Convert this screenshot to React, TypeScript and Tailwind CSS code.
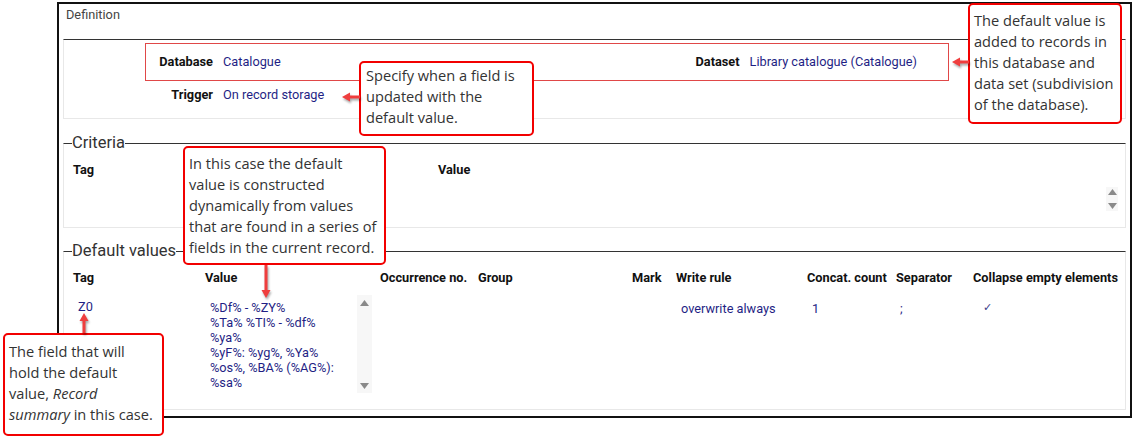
import type { ReactNode } from 'react'

const navy = 'text-[#1f1f85]'

function Arrow({ len, dir }: { len: number; dir: 'left' | 'up' | 'down' }) {
  const horiz = dir === 'left'
  const w = horiz ? len : 10
  const h = horiz ? 10 : len
  let head = ''
  let shaft = { x: 0, y: 0, w: 0, h: 0 }
  if (dir === 'left') {
    head = `0,5 8,0.5 8,9.5`
    shaft = { x: 7, y: 3.5, w: len - 7, h: 3 }
  } else if (dir === 'down') {
    head = `5,${len} 0.5,${len - 8} 9.5,${len - 8}`
    shaft = { x: 3.5, y: 0, w: 3, h: len - 7 }
  } else {
    head = `5,0 0.5,8 9.5,8`
    shaft = { x: 3.5, y: 7, w: 3, h: len - 7 }
  }
  return (
    <svg width={w} height={h} viewBox={`0 0 ${w} ${h}`} className="drop-shadow-[1px_2px_1px_rgba(0,0,0,0.35)]">
      <polygon points={head} fill="#ef3e3e" />
      <rect x={shaft.x} y={shaft.y} width={shaft.w} height={shaft.h} fill="#ef3e3e" />
    </svg>
  )
}

function Callout({ className, lines }: { className: string; lines: ReactNode[] }) {
  return (
    <div
      className={
        "absolute whitespace-nowrap rounded-[5px] border-2 border-[#f20000] bg-white font-['Open_Sans',sans-serif] text-[14.6px] leading-[21px] text-[#333] " +
        className
      }
    >
      {lines.map((l, i) => (
        <div key={i}>{l}</div>
      ))}
    </div>
  )
}

function Tri({ up }: { up?: boolean }) {
  return (
    <svg width="9" height="6" viewBox="0 0 9 6">
      <polygon points={up ? '4.5,0 0,6 9,6' : '0,0 9,0 4.5,6'} fill="#8a8a8a" />
    </svg>
  )
}

const cols = 'grid grid-cols-[132px_175px_98px_154px_44px_131px_89px_77px_1fr] pl-[9px]'

export default function App() {
  return (
    <div className="relative h-[439px] w-[1133px] overflow-hidden bg-white font-['Roboto',sans-serif] text-[12.75px] text-[#111]">
      <div className="ml-[57px] mt-[2px] flex h-[416px] w-[1075px] flex-col border-2 border-[#111] px-[4px]">
        <div className="h-[35px] pl-[3px] pt-[4px] leading-[14px] text-[#444]">Definition</div>

        {/* definition */}
        <section className="h-[80px] border border-[#e8e8e8] border-t-[#333]">
          <div className="ml-[81px] mt-[3px] flex h-[38px] w-[804px] items-center justify-between border border-[#e04848] pr-[31px]">
            <div className="flex items-center">
              <span className="w-[67px] text-right font-bold">Database</span>
              <span className={'ml-[10px] ' + navy}>Catalogue</span>
            </div>
            <div className="flex items-center">
              <span className="font-bold">Dataset</span>
              <span className={'ml-[10px] ' + navy}>Library catalogue (Catalogue)</span>
            </div>
          </div>
          <div className="mt-[6px] flex h-[16px] items-center pl-[82px] leading-[16px]">
            <span className="w-[67px] text-right font-bold">Trigger</span>
            <span className={'ml-[10px] ' + navy}>On record storage</span>
          </div>
        </section>

        {/* criteria */}
        <fieldset className="mt-[15px] h-[94px] border border-[#e8e8e8] border-t-[#333]">
          <legend className="ml-[8px] text-[16.5px] leading-[18px] text-[#333]">Criteria</legend>
          <div className="grid grid-cols-[365px_1fr] pl-[9px] pt-[11px] font-bold leading-[14px]">
            <span>Tag</span>
            <span>Value</span>
          </div>
          <div className="mr-[7px] mt-[10px] flex justify-end">
            <div className="flex h-[24px] w-[12px] flex-col items-center justify-between bg-[#f7f7f7] py-[2px]">
              <Tri up />
              <Tri />
            </div>
          </div>
        </fieldset>

        {/* default values */}
        <fieldset className="mt-[14px] h-[168px] border border-[#e8e8e8] border-t-[#333]">
          <legend className="ml-[8px] text-[16.5px] leading-[18px] text-[#333]">Default values</legend>
          <div className={cols + ' pt-[11px] font-bold leading-[14px]'}>
            <span>Tag</span>
            <span>Value</span>
            <span>Occurrence no.</span>
            <span>Group</span>
            <span>Mark</span>
            <span>Write rule</span>
            <span>Concat. count</span>
            <span>Separator</span>
            <span className="whitespace-nowrap">Collapse empty elements</span>
          </div>
          <div className={cols + ' mt-[10px] leading-[15px]'}>
            <span className={'pl-[5px] pt-[4px] ' + navy}>Z0</span>
            <div className="flex">
              <div className={'w-[152px] whitespace-nowrap pl-[5px] pt-[5px] ' + navy}>
                <div>%Df% - %ZY%</div>
                <div>%Ta% %TI% - %df%</div>
                <div>%ya%</div>
                <div>%yF%: %yg%, %Ya%</div>
                <div>%os%, %BA% (%AG%):</div>
                <div>%sa%</div>
              </div>
              <div className="flex h-[98px] w-[15px] flex-col items-center justify-between bg-[#f7f7f7] pb-[4px] pt-[5px]">
                <Tri up />
                <Tri />
              </div>
            </div>
            <span />
            <span />
            <span />
            <span className={'pl-[5px] pt-[6px] ' + navy}>overwrite always</span>
            <span className={'pl-[5px] pt-[6px] ' + navy}>1</span>
            <span className={'pl-[4px] pt-[6px] ' + navy}>;</span>
            <span className="pl-[10px] pt-[5px] font-['DejaVu_Sans',sans-serif] text-[11px] text-[#3a3a8a]">✓</span>
          </div>
        </fieldset>
      </div>

      {/* callouts */}
      <Callout
        className="left-[359px] top-[61px] h-[75px] w-[175px] px-[5px] pt-[2px]"
        lines={['Specify when a field is', 'updated with the', 'default value.']}
      />
      <Callout
        className="left-[968px] top-[3px] h-[121px] w-[154px] px-[4px] pt-[5px]"
        lines={['The default value is', 'added to records in', 'this database and', 'data set (subdivision', 'of the database).']}
      />
      <Callout
        className="left-[183px] top-[146px] h-[119px] w-[203px] px-[4px] pt-[5px]"
        lines={[
          'In this case the default',
          'value is constructed',
          'dynamically from values',
          'that are found in a series of',
          'fields in the current record.',
        ]}
      />
      <Callout
        className="left-[3px] top-[333px] h-[103px] w-[161px] px-[4px] pt-[6px]"
        lines={[
          'The field that will',
          'hold the default',
          <>
            value, <i>Record</i>
          </>,
          <>
            <i>summary</i> in this case.
          </>,
        ]}
      />

      <div className="absolute left-[342px] top-[92px]">
        <Arrow len={18} dir="left" />
      </div>
      <div className="absolute left-[952px] top-[57px]">
        <Arrow len={17} dir="left" />
      </div>
      <div className="absolute left-[261px] top-[265px]">
        <Arrow len={33} dir="down" />
      </div>
      <div className="absolute left-[79px] top-[313px]">
        <Arrow len={20} dir="up" />
      </div>
    </div>
  )
}
